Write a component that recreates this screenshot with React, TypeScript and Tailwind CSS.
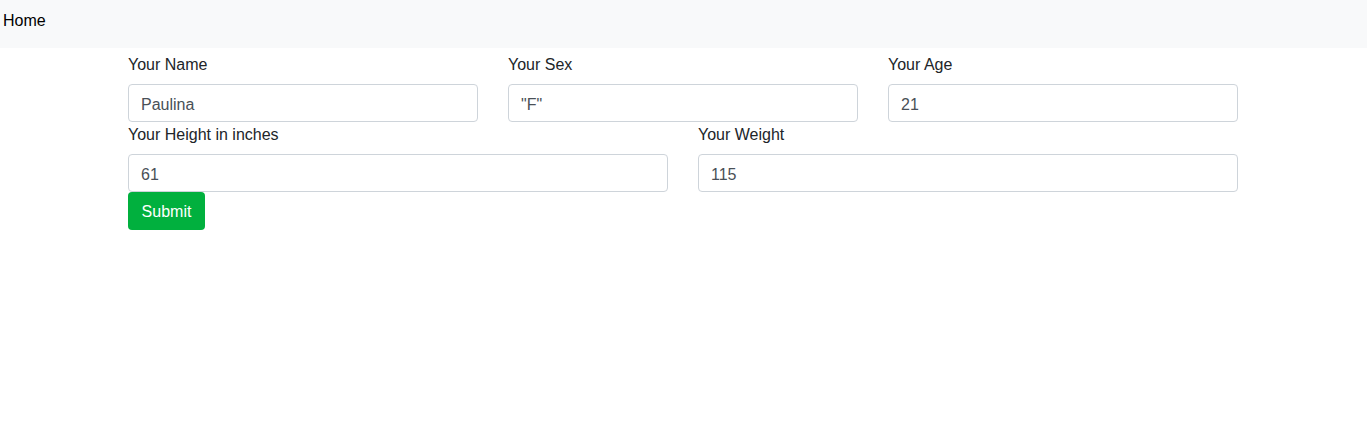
const font = { fontFamily: '"Liberation Sans", Arial, sans-serif' };

interface FieldProps {
  label: string;
  value: string;
  className?: string;
}

function Field({ label, value, className }: FieldProps) {
  return (
    <div className={"flex flex-col px-[15px] " + (className ?? "")}>
      <label className="text-[16px] leading-6 text-[#212529] pt-px mb-[7px]">{label}</label>
      <input
        readOnly
        value={value}
        className="h-[38px] w-full rounded-[4px] border border-[#ced4da] bg-white px-3 pt-[3px] text-[16px] text-[#495057] outline-none"
        style={font}
      />
    </div>
  );
}

export default function App() {
  return (
    <div className="min-h-[430px] bg-white text-[#212529]" style={font}>
      <nav className="h-12 bg-[#f8f9fa] px-[3px] pt-[9px]">
        <span className="block text-[16px] leading-6 text-black">Home</span>
      </nav>
      <form className="ml-[113px] w-[1140px] px-[15px] pt-1">
        <div className="flex -mx-[15px]">
          <Field className="w-1/3" label="Your Name" value="Paulina" />
          <Field className="w-1/3" label="Your Sex" value={'"F"'} />
          <Field className="w-1/3" label="Your Age" value="21" />
        </div>
        <div className="flex -mx-[15px]">
          <Field className="w-1/2" label="Your Height in inches" value="61" />
          <Field className="w-1/2" label="Your Weight" value="115" />
        </div>
        <button
          type="button"
          className="h-[38px] w-[77px] pt-[2px] rounded-[4px] bg-[#01b03e] text-white text-[16px]"
        >
          Submit
        </button>
      </form>
    </div>
  );
}
